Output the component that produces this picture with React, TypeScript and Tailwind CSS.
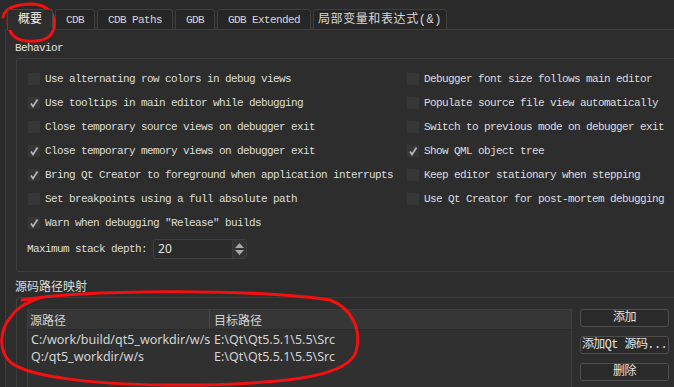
const tabs = ['概要', 'CDB', 'CDB Paths', 'GDB', 'GDB Extended', '局部变量和表达式(&)'];

const leftOptions = [
  { label: 'Use alternating row colors in debug views', on: false },
  { label: 'Use tooltips in main editor while debugging', on: true },
  { label: 'Close temporary source views on debugger exit', on: false },
  { label: 'Close temporary memory views on debugger exit', on: true },
  { label: 'Bring Qt Creator to foreground when application interrupts', on: true },
  { label: 'Set breakpoints using a full absolute path', on: false },
  { label: 'Warn when debugging "Release" builds', on: true },
];

const rightOptions = [
  { label: 'Debugger font size follows main editor', on: false },
  { label: 'Populate source file view automatically', on: false },
  { label: 'Switch to previous mode on debugger exit', on: false },
  { label: 'Show QML object tree', on: true },
  { label: 'Keep editor stationary when stepping', on: false },
  { label: 'Use Qt Creator for post-mortem debugging', on: false },
];

const mappings = [
  { src: 'C:/work/build/qt5_workdir/w/s', dst: 'E:\\Qt\\Qt5.5.1\\5.5\\Src' },
  { src: 'Q:/qt5_workdir/w/s', dst: 'E:\\Qt\\Qt5.5.1\\5.5\\Src' },
];

const mono = "font-['Liberation_Mono','Noto_Sans_CJK_SC',monospace] text-[11px] tracking-[-0.6px]";

function CheckRow({ label, on }: { label: string; on: boolean }) {
  return (
    <div className="flex h-[24px] items-center gap-[5px]">
      <span className="flex size-[12px] shrink-0 items-center justify-center bg-[#363636]">
        {on && (
          <svg width="12" height="12" viewBox="0 0 12 12">
            <path d="M3 6.5 L5 9.5 L9.5 2.5" fill="none" stroke="#b8b8b8" strokeWidth="1.7" />
          </svg>
        )}
      </span>
      <span className={`${mono} whitespace-nowrap leading-[14px] text-[#dedede]`}>{label}</span>
    </div>
  );
}

function Button({ children }: { children: React.ReactNode }) {
  return (
    <div className="flex h-[18px] items-center justify-center rounded-[3px] border border-[#4e4e4e] bg-[#2a2a2a] text-[#e2e2e2]">
      <span className={`${mono} whitespace-nowrap leading-[14px] text-[12px] tracking-[-0.4px]`}>{children}</span>
    </div>
  );
}

export default function App() {
  return (
    <div className="relative h-[387px] w-[674px] overflow-hidden bg-[#2a2a2a]">
      <div className="flex h-[29px] gap-[2px] pl-[7px] pt-[9px]">
        {tabs.map((t, i) => (
          <div
            key={t}
            className={
              i === 0
                ? 'relative z-10 mb-[-1px] flex h-[21px] items-center rounded-t-[3px] border border-b-0 border-[#474747] bg-[#2d2d2d] px-[10px] text-[#f0f0f0]'
                : i === tabs.length - 1
                  ? 'flex h-[20px] w-[134px] items-center justify-center rounded-t-[3px] border border-b-0 border-[#3e3e3e] bg-[#262626] text-[#d8d8d8]'
                  : 'flex h-[20px] items-center rounded-t-[3px] border border-b-0 border-[#3e3e3e] bg-[#262626] px-[10px] text-[#d8d8d8]'
            }
          >
            <span
              className={`${mono} whitespace-nowrap leading-[14px] ${i === 0 ? 'text-[12px] tracking-[0px]' : ''} ${i === tabs.length - 1 ? 'text-[12px] tracking-[0.6px]' : ''}`}
            >
              {t}
            </span>
          </div>
        ))}
      </div>

      <div className="ml-[5px] h-[358px] w-[700px] border-l border-t border-[#3d3d3d] bg-[#2d2d2d] pl-[10px] pt-[11px]">
        <div className={`${mono} ml-[-1px] h-[14px] leading-[14px] text-[#e2e2e2]`}>Behavior</div>
        <div className="mt-[3px] h-[214px] rounded-[2px] border border-[#3c3c3c] pl-[11px] pt-[8px]">
          <div className="flex">
            <div className="w-[379px]">
              {leftOptions.map((o) => (
                <CheckRow key={o.label} {...o} />
              ))}
            </div>
            <div>
              {rightOptions.map((o) => (
                <CheckRow key={o.label} {...o} />
              ))}
            </div>
          </div>
          <div className="ml-[-1px] mt-[4px] flex h-[20px] items-center gap-[6px]">
            <span className={`${mono} whitespace-nowrap leading-[14px] text-[#dedede]`}>Maximum stack depth:</span>
            <div className="flex h-[20px] w-[94px] rounded-[3px] border border-[#404040] bg-[#2a2a2a]">
              <span className="flex-1 pl-[4px] font-['Noto_Sans',sans-serif] text-[12px] leading-[18px] text-[#e4e4e4]">20</span>
              <div className="flex w-[14px] flex-col items-center justify-center gap-[2px] border-l border-[#3a3a3a] bg-[#333333]">
                <svg width="9" height="5" viewBox="0 0 9 5">
                  <path d="M0 5 L4.5 0 L9 5 Z" fill="#a8a8a8" />
                </svg>
                <svg width="9" height="5" viewBox="0 0 9 5">
                  <path d="M0 0 L4.5 5 L9 0 Z" fill="#a8a8a8" />
                </svg>
              </div>
            </div>
          </div>
        </div>

        <div className="ml-[-1px] mt-[6px] h-[16px] font-['Noto_Sans_CJK_SC',sans-serif] text-[12px] leading-[16px] text-[#dcdcdc]">源码路径映射</div>
        <div className="mt-[3px] flex h-[120px] gap-[8px] rounded-[2px] border border-[#3c3c3c] pl-[10px] pt-[11px]">
          <div className="h-[100px] w-[545px] border border-[#3e3e3e] bg-[#303030] font-['Noto_Sans','Noto_Sans_CJK_SC',sans-serif] text-[12.5px] text-[#d4d4d4]">
            <div className="flex h-[20px] border-b border-[#2a2a2a] bg-[#363636] font-['Noto_Sans_CJK_SC',sans-serif] text-[12px] leading-[19px]">
              <div className="w-[182px] border-r border-[#484848] pl-[2px]">源路径</div>
              <div className="pl-[4px]">目标路径</div>
            </div>
            <div className="pt-[1px]">
              {mappings.map((m) => (
                <div key={m.src} className="flex h-[17px] items-center leading-[17px]">
                  <div className="w-[183px] pl-[3px] whitespace-nowrap">{m.src}</div>
                  <div className="pl-[3px] whitespace-nowrap">{m.dst}</div>
                </div>
              ))}
            </div>
          </div>
          <div className="flex w-[89px] flex-col gap-[9px]">
            <Button>添加</Button>
            <Button>添加Qt 源码...</Button>
            <Button>删除</Button>
          </div>
        </div>
      </div>

      <svg className="pointer-events-none absolute left-0 top-0" width="674" height="387" viewBox="0 0 674 387">
        <path
          d="M3 17 C5 7 18 4 33 4 C48 5 56 14 54 27 C52 39 42 42 27 41 C14 40 8 32 8 20"
          fill="none"
          stroke="#f21010"
          strokeWidth="3"
          strokeLinecap="round"
        />
        <path
          d="M22 300 C80 290 250 288 330 300 C352 308 362 330 356 352 C348 374 300 383 200 385 C100 386 30 378 10 362 C-2 350 0 330 10 318 C15 310 22 304 42 297"
          fill="none"
          stroke="#f21010"
          strokeWidth="3"
          strokeLinecap="round"
        />
      </svg>
    </div>
  );
}
